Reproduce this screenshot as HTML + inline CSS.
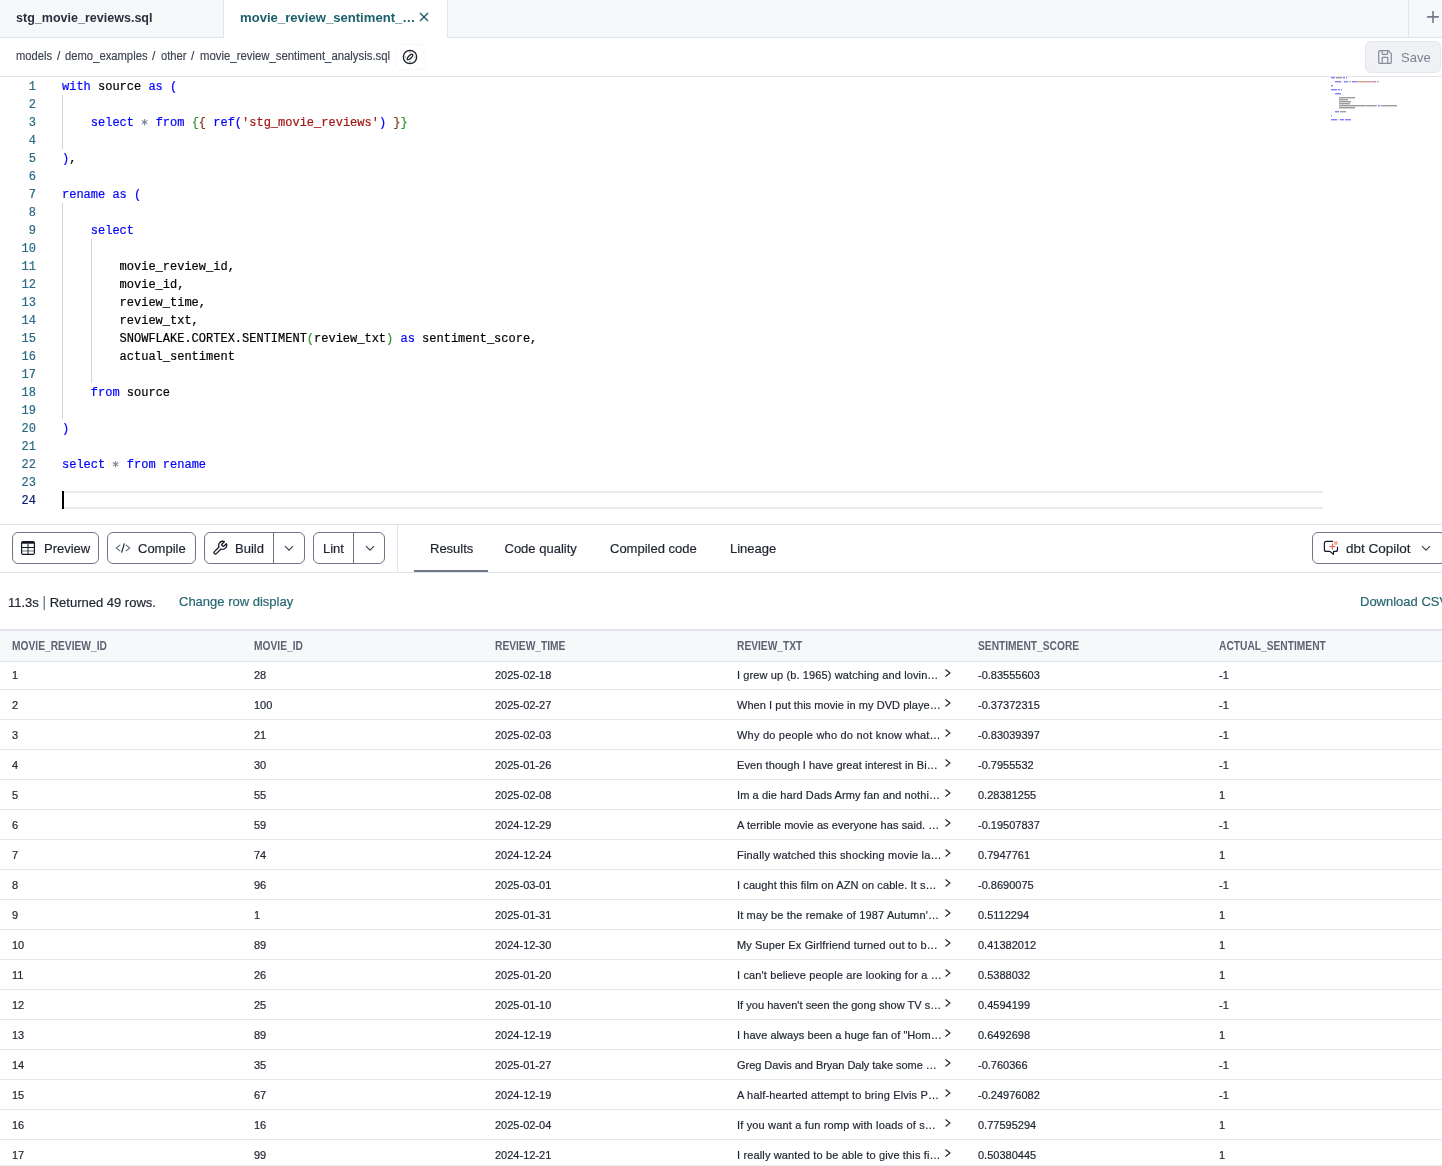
<!DOCTYPE html>
<html><head><meta charset="utf-8">
<style>
*{box-sizing:border-box;margin:0;padding:0}
html,body{width:1442px;height:1166px;overflow:hidden;background:#fff;}
#wrap{position:absolute;left:0;top:0;width:1442px;height:1166px;will-change:transform;font-family:"Liberation Sans",sans-serif;color:#1f2430}
.abs{position:absolute}
#tabbar{position:absolute;left:0;top:0;width:1442px;height:38px;background:#f7f8fa;border-bottom:1px solid #e1e4ea}
.tab1{position:absolute;left:0;top:0;width:224px;height:37px;border-right:1px solid #e1e4ea}
.tab2{position:absolute;left:224px;top:0;width:224px;height:38px;background:#fff;border-right:1px solid #e1e4ea}
.tabtxt{position:absolute;top:10px;font-size:13px;font-weight:700;white-space:nowrap;line-height:16px}
#crumb{position:absolute;left:0;top:38px;width:1442px;height:39px;border-bottom:1px solid #e1e4ea;background:#fff}
#code{position:absolute;left:0;top:78px;width:1442px;height:447px;font-family:"Liberation Mono",monospace;font-size:12px;-webkit-text-stroke:0.2px currentColor}
.ln{position:absolute;left:0;width:36px;text-align:right;color:#2b6a85;height:18px;line-height:18px}
.cl{position:absolute;left:62px;height:18px;line-height:18px;white-space:pre;color:#000}
.k{color:#0000ff}.b1{color:#0000ff}.b2{color:#319331}.b3{color:#7b3814}.s{color:#a31515}.op{color:#778899}
.guide{position:absolute;width:1px;background:#d3d3d3}
#toolbar{position:absolute;left:0;top:524px;width:1442px;height:49px;border-top:1px solid #e1e4ea;border-bottom:1px solid #e1e4ea}
.btn{position:absolute;top:7px;height:32px;border:1px solid #6e7687;border-radius:6px;background:#fff}
.btxt{position:absolute;top:8px;font-size:13px;line-height:16px;white-space:nowrap;color:#1f2430;-webkit-text-stroke:0.2px currentColor}
.rtab{position:absolute;top:16px;font-size:13px;line-height:16px;color:#1f2430;white-space:nowrap;-webkit-text-stroke:0.2px currentColor}
#status{position:absolute;left:0;top:573px;width:1442px;height:56px;-webkit-text-stroke:0.2px currentColor}
#tbl{position:absolute;left:0;top:629px;width:1442px}
.hdr{position:absolute;left:0;top:0;width:1442px;height:33px;background:#f7f8fa;border-top:2px solid #e1e4ea;border-bottom:1px solid #e1e4ea}
.hc{position:absolute;top:8px;font-size:12px;font-weight:700;color:#5c6474;line-height:14px;white-space:nowrap;transform:scaleX(0.852);transform-origin:0 0}
.row{position:absolute;left:0;width:1442px;border-bottom:1px solid #e4e6eb}
.c{position:absolute;font-size:11px;line-height:14px;color:#1f2430;white-space:nowrap;-webkit-text-stroke:0.2px #1f2430}
</style></head><body><div id="wrap">

<div id="tabbar">
  <div class="tab1"><div class="tabtxt" style="left:16px;color:#2a303b;font-size:13.5px;top:10px;transform:scaleX(0.928);transform-origin:0 0">stg_movie_reviews.sql</div></div>
  <div class="tab2"><div class="tabtxt" style="left:16px;color:#1a5f69;font-size:13.5px;top:10px;transform:scaleX(0.97);transform-origin:0 0">movie_review_sentiment_…</div>
    <svg class="abs" style="left:194.5px;top:11.5px" width="10" height="10" viewBox="0 0 10 10"><path d="M1 1L9 9M9 1L1 9" stroke="#15555e" stroke-width="1.3" fill="none"/></svg>
  </div>
  <div class="abs" style="left:1408px;top:0;width:1px;height:37px;background:#e1e4ea"></div>
  <svg class="abs" style="left:1426px;top:10px" width="14" height="14" viewBox="0 0 14 14"><path d="M7 1.1V12.9M1.1 6.9H12.9" stroke="#737988" stroke-width="1.6" fill="none"/></svg>
</div>

<div id="crumb">
  <div class="abs" style="left:16px;top:10.5px;font-size:12px;line-height:14px;color:#3c4350;white-space:nowrap;-webkit-text-stroke:0.15px currentColor;transform:scaleX(0.93);transform-origin:0 0">models</div><div class="abs" style="left:57px;top:10.5px;font-size:12px;line-height:14px;color:#3c4350;white-space:nowrap;-webkit-text-stroke:0.15px currentColor;transform:scaleX(1);transform-origin:0 0">/</div><div class="abs" style="left:65px;top:10.5px;font-size:12px;line-height:14px;color:#3c4350;white-space:nowrap;-webkit-text-stroke:0.15px currentColor;transform:scaleX(0.937);transform-origin:0 0">demo_examples</div><div class="abs" style="left:152px;top:10.5px;font-size:12px;line-height:14px;color:#3c4350;white-space:nowrap;-webkit-text-stroke:0.15px currentColor;transform:scaleX(1);transform-origin:0 0">/</div><div class="abs" style="left:160.5px;top:10.5px;font-size:12px;line-height:14px;color:#3c4350;white-space:nowrap;-webkit-text-stroke:0.15px currentColor;transform:scaleX(0.935);transform-origin:0 0">other</div><div class="abs" style="left:191px;top:10.5px;font-size:12px;line-height:14px;color:#3c4350;white-space:nowrap;-webkit-text-stroke:0.15px currentColor;transform:scaleX(1);transform-origin:0 0">/</div><div class="abs" style="left:199.5px;top:10.5px;font-size:12px;line-height:14px;color:#3c4350;white-space:nowrap;-webkit-text-stroke:0.15px currentColor;transform:scaleX(0.947);transform-origin:0 0">movie_review_sentiment_analysis.sql</div>
  <div class="abs" style="left:395px;top:6px;width:31px;height:26px;border:1px solid #f6f7f9;border-radius:6px"></div>
  <svg class="abs" style="left:402px;top:11px" width="16" height="16" viewBox="0 0 16 16"><circle cx="8" cy="8" r="6.7" stroke="#1a1f2b" stroke-width="1.25" fill="none"/><path d="M8 2.3V3.9M8 12.1V13.7M2.3 8H3.9M12.1 8H13.7" stroke="#7d838f" stroke-width="1.2"/><ellipse cx="8" cy="8" rx="3.6" ry="1.45" transform="rotate(-45 8 8)" stroke="#1a1f2b" stroke-width="1.25" fill="none"/></svg>
  <div class="abs" style="left:1365px;top:3px;width:76px;height:32px;background:#eff1f4;border:1px solid #e3e6ea;border-radius:6px"></div>
  <svg class="abs" style="left:1378px;top:12px" width="14" height="14" viewBox="0 0 14 14"><path d="M1.5 0.7H10.3L13.3 3.7V12.5Q13.3 13.3 12.5 13.3H1.5Q0.7 13.3 0.7 12.5V1.5Q0.7 0.7 1.5 0.7Z M3.6 0.7L4.6 4.3H9.2L10 1.2 M4.2 13.3V7.4H9.8V13.3" stroke="#858c9a" stroke-width="1.2" fill="none" stroke-linejoin="round"/></svg>
  <div class="abs" style="left:1401px;top:12px;font-size:13px;line-height:16px;color:#7b8291">Save</div>
</div>

<div id="code">
<div class="ln" style="top:0px">1</div>
<div class="cl" style="top:0px"><span class="k">with</span> source <span class="k">as</span> <span class="b1">(</span></div>
<div class="ln" style="top:18px">2</div>
<div class="ln" style="top:36px">3</div>
<div class="cl" style="top:36px">    <span class="k">select</span> <svg width="7.2" height="12" viewBox="0 0 7.2 12" style="vertical-align:-2px"><path d="M3.6 2.9V9.5M0.8 4.55L6.4 7.85M6.4 4.55L0.8 7.85" stroke="#7a8594" stroke-width="1.05" fill="none"/></svg> <span class="k">from</span> <span class="b2">{</span><span class="b3">{</span> <span class="k">ref</span><span class="b1">(</span><span class="s">&#x27;stg_movie_reviews&#x27;</span><span class="b1">)</span> <span class="b3">}</span><span class="b2">}</span></div>
<div class="ln" style="top:54px">4</div>
<div class="ln" style="top:72px">5</div>
<div class="cl" style="top:72px"><span class="b1">)</span>,</div>
<div class="ln" style="top:90px">6</div>
<div class="ln" style="top:108px">7</div>
<div class="cl" style="top:108px"><span class="k">rename</span> <span class="k">as</span> <span class="b1">(</span></div>
<div class="ln" style="top:126px">8</div>
<div class="ln" style="top:144px">9</div>
<div class="cl" style="top:144px">    <span class="k">select</span></div>
<div class="ln" style="top:162px">10</div>
<div class="ln" style="top:180px">11</div>
<div class="cl" style="top:180px">        movie_review_id,</div>
<div class="ln" style="top:198px">12</div>
<div class="cl" style="top:198px">        movie_id,</div>
<div class="ln" style="top:216px">13</div>
<div class="cl" style="top:216px">        review_time,</div>
<div class="ln" style="top:234px">14</div>
<div class="cl" style="top:234px">        review_txt,</div>
<div class="ln" style="top:252px">15</div>
<div class="cl" style="top:252px">        SNOWFLAKE.CORTEX.SENTIMENT<span class="b2">(</span>review_txt<span class="b2">)</span> <span class="k">as</span> sentiment_score,</div>
<div class="ln" style="top:270px">16</div>
<div class="cl" style="top:270px">        actual_sentiment</div>
<div class="ln" style="top:288px">17</div>
<div class="ln" style="top:306px">18</div>
<div class="cl" style="top:306px">    <span class="k">from</span> source</div>
<div class="ln" style="top:324px">19</div>
<div class="ln" style="top:342px">20</div>
<div class="cl" style="top:342px"><span class="b1">)</span></div>
<div class="ln" style="top:360px">21</div>
<div class="ln" style="top:378px">22</div>
<div class="cl" style="top:378px"><span class="k">select</span> <svg width="7.2" height="12" viewBox="0 0 7.2 12" style="vertical-align:-2px"><path d="M3.6 2.9V9.5M0.8 4.55L6.4 7.85M6.4 4.55L0.8 7.85" stroke="#7a8594" stroke-width="1.05" fill="none"/></svg> <span class="k">from</span> <span class="k">rename</span></div>
<div class="ln" style="top:396px">23</div>
<div class="ln" style="top:414px;color:#0b216f">24</div>
<div class="guide" style="left:62px;top:17px;height:54px"></div>
<div class="guide" style="left:62px;top:125px;height:216px"></div>
<div class="guide" style="left:91px;top:161px;height:144px"></div>
<div class="abs" style="left:62px;top:413px;width:1261px;height:18px;border-top:2px solid #ececec;border-bottom:2px solid #ececec"></div>
<div class="abs" style="left:62px;top:413px;width:2px;height:18px;background:#000"></div>
<svg class="abs" style="left:1331px;top:-1px" width="100" height="60"><rect x="0" y="0" width="4" height="1.4" opacity="0.75" fill="#5555ff"/><rect x="5" y="0" width="6" height="1.4" opacity="0.75" fill="#7a7a7a"/><rect x="12" y="0" width="2" height="1.4" opacity="0.75" fill="#5555ff"/><rect x="15" y="0" width="1" height="1.4" opacity="0.75" fill="#5560ff"/><rect x="4" y="4" width="6" height="1.4" opacity="0.75" fill="#5555ff"/><rect x="11" y="4" width="1" height="1.4" opacity="0.75" fill="#b0b8c0"/><rect x="13" y="4" width="4" height="1.4" opacity="0.75" fill="#5555ff"/><rect x="18" y="4" width="1" height="1.4" opacity="0.75" fill="#8abf9a"/><rect x="19" y="4" width="1" height="1.4" opacity="0.75" fill="#a08070"/><rect x="21" y="4" width="3" height="1.4" opacity="0.75" fill="#5555ff"/><rect x="24" y="4" width="1" height="1.4" opacity="0.75" fill="#5560ff"/><rect x="25" y="4" width="19" height="1.4" opacity="0.75" fill="#c87a7a"/><rect x="44" y="4" width="1" height="1.4" opacity="0.75" fill="#5560ff"/><rect x="46" y="4" width="1" height="1.4" opacity="0.75" fill="#a08070"/><rect x="47" y="4" width="1" height="1.4" opacity="0.75" fill="#8abf9a"/><rect x="0" y="8" width="1" height="1.4" opacity="0.75" fill="#5560ff"/><rect x="1" y="8" width="1" height="1.4" opacity="0.75" fill="#7a7a7a"/><rect x="0" y="12" width="6" height="1.4" opacity="0.75" fill="#5555ff"/><rect x="7" y="12" width="2" height="1.4" opacity="0.75" fill="#5555ff"/><rect x="10" y="12" width="1" height="1.4" opacity="0.75" fill="#5560ff"/><rect x="4" y="16" width="6" height="1.4" opacity="0.75" fill="#5555ff"/><rect x="8" y="20" width="16" height="1.4" opacity="0.75" fill="#7a7a7a"/><rect x="8" y="22" width="9" height="1.4" opacity="0.75" fill="#7a7a7a"/><rect x="8" y="24" width="12" height="1.4" opacity="0.75" fill="#7a7a7a"/><rect x="8" y="26" width="11" height="1.4" opacity="0.75" fill="#7a7a7a"/><rect x="8" y="28" width="26" height="1.4" opacity="0.75" fill="#7a7a7a"/><rect x="34" y="28" width="1" height="1.4" opacity="0.75" fill="#8abf9a"/><rect x="35" y="28" width="10" height="1.4" opacity="0.75" fill="#7a7a7a"/><rect x="45" y="28" width="1" height="1.4" opacity="0.75" fill="#8abf9a"/><rect x="47" y="28" width="2" height="1.4" opacity="0.75" fill="#5555ff"/><rect x="50" y="28" width="16" height="1.4" opacity="0.75" fill="#7a7a7a"/><rect x="8" y="30" width="16" height="1.4" opacity="0.75" fill="#7a7a7a"/><rect x="4" y="34" width="4" height="1.4" opacity="0.75" fill="#5555ff"/><rect x="9" y="34" width="6" height="1.4" opacity="0.75" fill="#7a7a7a"/><rect x="0" y="38" width="1" height="1.4" opacity="0.75" fill="#5560ff"/><rect x="0" y="42" width="6" height="1.4" opacity="0.75" fill="#5555ff"/><rect x="7" y="42" width="1" height="1.4" opacity="0.75" fill="#b0b8c0"/><rect x="9" y="42" width="4" height="1.4" opacity="0.75" fill="#5555ff"/><rect x="14" y="42" width="6" height="1.4" opacity="0.75" fill="#5555ff"/></svg>
</div>

<div id="toolbar">
<div class="btn" style="left:12px;width:87px"><svg class="abs" style="left:8px;top:8px" width="14" height="14" viewBox="0 0 14 14"><rect x="0.6" y="0.6" width="12.8" height="12.8" rx="1.6" fill="none" stroke="#141926" stroke-width="1.2"/><rect x="0.6" y="0.6" width="12.8" height="2.2" rx="1" fill="#141926"/><path d="M0.6 6.5H13.4M7 2.6V13.4" stroke="#141926" stroke-width="1"/><path d="M0.6 10H13.4" stroke="#141926" stroke-width="1" opacity="0.6"/></svg><div class="btxt" style="left:31px">Preview</div></div>
<div class="btn" style="left:107px;width:89px"><svg class="abs" style="left:7px;top:10px" width="16" height="11" viewBox="0 0 16 11"><path d="M4.8 2.2L1.2 5L4.8 7.8M11.2 2.2L14.8 5L11.2 7.8" stroke="#6b7280" stroke-width="1.1" fill="none" stroke-linecap="round"/><path d="M9.2 0.8L6.8 9.2" stroke="#141926" stroke-width="1.1" stroke-linecap="round"/></svg><div class="btxt" style="left:30px">Compile</div></div>
<div class="btn" style="left:204px;width:101px"><svg class="abs" style="left:6.5px;top:6.5px" width="16" height="16" viewBox="0 0 24 24"><path d="M14.7 6.3a1 1 0 0 0 0 1.4l1.6 1.6a1 1 0 0 0 1.4 0l3.77-3.77a6 6 0 0 1-7.94 7.94l-6.91 6.91a2.12 2.12 0 0 1-3-3l6.91-6.91a6 6 0 0 1 7.94-7.94l-3.76 3.76z" stroke="#141926" stroke-width="1.9" fill="none" stroke-linejoin="round"/></svg><div class="btxt" style="left:30px">Build</div><div class="abs" style="left:68px;top:0;width:1px;height:30px;background:#6e7687"></div><svg class="abs" style="left:79px;top:12px" width="10" height="7" viewBox="0 0 10 7"><path d="M1 1.2L5 5.2L9 1.2" stroke="#3a4150" stroke-width="1.2" fill="none"/></svg></div>
<div class="btn" style="left:313px;width:72px"><div class="btxt" style="left:9px">Lint</div><div class="abs" style="left:39px;top:0;width:1px;height:30px;background:#6e7687"></div><svg class="abs" style="left:51px;top:12px" width="10" height="7" viewBox="0 0 10 7"><path d="M1 1.2L5 5.2L9 1.2" stroke="#3a4150" stroke-width="1.2" fill="none"/></svg></div>
<div class="abs" style="left:397px;top:0;width:1px;height:47px;background:#e1e4ea"></div>
<div class="rtab" style="left:430px">Results</div>
<div class="rtab" style="left:504.5px">Code quality</div>
<div class="rtab" style="left:610px">Compiled code</div>
<div class="rtab" style="left:730px">Lineage</div>
<div class="abs" style="left:414px;top:44.5px;width:74px;height:2.5px;background:#6f7789"></div>
<div class="btn" style="left:1312px;width:134px;top:7px"><svg class="abs" style="left:7px;top:3px" width="22" height="22" viewBox="0 0 22 22"><path d="M12.6 5.45H6.4Q4.4 5.45 4.4 7.45V13.4Q4.4 15.4 6.4 15.4H9.9L13.4 18.3L13.6 15.4H15.5Q17.5 15.4 17.5 13.4V11.2" stroke="#151a26" stroke-width="1.2" fill="none" stroke-linecap="round" stroke-linejoin="round"/><path d="M12.45 8V9.8M12.45 11.2V13M9.95 10.5H11.75M13.15 10.5H14.95" stroke="#e8553e" stroke-width="1.1" stroke-linecap="round"/><circle cx="15.9" cy="7" r="1.9" fill="#f4a898"/></svg><div class="btxt" style="left:33px;top:8px;font-size:13.5px">dbt Copilot</div><svg class="abs" style="left:108px;top:12px" width="10" height="7" viewBox="0 0 10 7"><path d="M1 1.2L5 5.2L9 1.2" stroke="#3a4150" stroke-width="1.2" fill="none"/></svg></div>
</div>

<div id="status">
  <div class="abs" style="left:8px;top:21px;font-size:13px;line-height:16px;color:#1f2430;white-space:nowrap">11.3s <span style="color:#737985;font-size:14px">|</span> Returned 49 rows.</div>
  <div class="abs" style="left:179px;top:21px;font-size:13px;line-height:16px;color:#286770;white-space:nowrap">Change row display</div>
  <div class="abs" style="left:1360px;top:21px;font-size:13px;line-height:16px;color:#286770;white-space:nowrap">Download CSV</div>
</div>

<div id="tbl">
<div class="hdr"><div class="hc" style="left:12px">MOVIE_REVIEW_ID</div><div class="hc" style="left:254px">MOVIE_ID</div><div class="hc" style="left:495px">REVIEW_TIME</div><div class="hc" style="left:737px">REVIEW_TXT</div><div class="hc" style="left:978px">SENTIMENT_SCORE</div><div class="hc" style="left:1219px">ACTUAL_SENTIMENT</div></div>
<div class="row" style="top:33px;height:28px"></div>
<div class="c" style="left:12px;top:39px">1</div>
<div class="c" style="left:254px;top:39px">28</div>
<div class="c" style="left:495px;top:39px">2025-02-18</div>
<div class="c" style="left:737px;top:39px;letter-spacing:0.118px">I grew up (b. 1965) watching and lovin…</div>
<div class="c" style="left:978px;top:39px">-0.83555603</div>
<div class="c" style="left:1219px;top:39px">-1</div>
<svg class="abs" style="left:944px;top:39px" width="8" height="10" viewBox="0 0 8 10"><path d="M1.5 1.5L6 5L1.5 8.5" stroke="#1f2430" stroke-width="1.1" fill="none"/></svg>
<div class="row" style="top:61px;height:30px"></div>
<div class="c" style="left:12px;top:69px">2</div>
<div class="c" style="left:254px;top:69px">100</div>
<div class="c" style="left:495px;top:69px">2025-02-27</div>
<div class="c" style="left:737px;top:69px;letter-spacing:0.054px">When I put this movie in my DVD playe…</div>
<div class="c" style="left:978px;top:69px">-0.37372315</div>
<div class="c" style="left:1219px;top:69px">-1</div>
<svg class="abs" style="left:944px;top:69px" width="8" height="10" viewBox="0 0 8 10"><path d="M1.5 1.5L6 5L1.5 8.5" stroke="#1f2430" stroke-width="1.1" fill="none"/></svg>
<div class="row" style="top:91px;height:30px"></div>
<div class="c" style="left:12px;top:99px">3</div>
<div class="c" style="left:254px;top:99px">21</div>
<div class="c" style="left:495px;top:99px">2025-02-03</div>
<div class="c" style="left:737px;top:99px;letter-spacing:0.215px">Why do people who do not know what…</div>
<div class="c" style="left:978px;top:99px">-0.83039397</div>
<div class="c" style="left:1219px;top:99px">-1</div>
<svg class="abs" style="left:944px;top:99px" width="8" height="10" viewBox="0 0 8 10"><path d="M1.5 1.5L6 5L1.5 8.5" stroke="#1f2430" stroke-width="1.1" fill="none"/></svg>
<div class="row" style="top:121px;height:30px"></div>
<div class="c" style="left:12px;top:129px">4</div>
<div class="c" style="left:254px;top:129px">30</div>
<div class="c" style="left:495px;top:129px">2025-01-26</div>
<div class="c" style="left:737px;top:129px;letter-spacing:0.082px">Even though I have great interest in Bi…</div>
<div class="c" style="left:978px;top:129px">-0.7955532</div>
<div class="c" style="left:1219px;top:129px">-1</div>
<svg class="abs" style="left:944px;top:129px" width="8" height="10" viewBox="0 0 8 10"><path d="M1.5 1.5L6 5L1.5 8.5" stroke="#1f2430" stroke-width="1.1" fill="none"/></svg>
<div class="row" style="top:151px;height:30px"></div>
<div class="c" style="left:12px;top:159px">5</div>
<div class="c" style="left:254px;top:159px">55</div>
<div class="c" style="left:495px;top:159px">2025-02-08</div>
<div class="c" style="left:737px;top:159px;letter-spacing:0.115px">Im a die hard Dads Army fan and nothi…</div>
<div class="c" style="left:978px;top:159px">0.28381255</div>
<div class="c" style="left:1219px;top:159px">1</div>
<svg class="abs" style="left:944px;top:159px" width="8" height="10" viewBox="0 0 8 10"><path d="M1.5 1.5L6 5L1.5 8.5" stroke="#1f2430" stroke-width="1.1" fill="none"/></svg>
<div class="row" style="top:181px;height:30px"></div>
<div class="c" style="left:12px;top:189px">6</div>
<div class="c" style="left:254px;top:189px">59</div>
<div class="c" style="left:495px;top:189px">2024-12-29</div>
<div class="c" style="left:737px;top:189px;letter-spacing:0.061px">A terrible movie as everyone has said. …</div>
<div class="c" style="left:978px;top:189px">-0.19507837</div>
<div class="c" style="left:1219px;top:189px">-1</div>
<svg class="abs" style="left:944px;top:189px" width="8" height="10" viewBox="0 0 8 10"><path d="M1.5 1.5L6 5L1.5 8.5" stroke="#1f2430" stroke-width="1.1" fill="none"/></svg>
<div class="row" style="top:211px;height:30px"></div>
<div class="c" style="left:12px;top:219px">7</div>
<div class="c" style="left:254px;top:219px">74</div>
<div class="c" style="left:495px;top:219px">2024-12-24</div>
<div class="c" style="left:737px;top:219px;letter-spacing:0.185px">Finally watched this shocking movie la…</div>
<div class="c" style="left:978px;top:219px">0.7947761</div>
<div class="c" style="left:1219px;top:219px">1</div>
<svg class="abs" style="left:944px;top:219px" width="8" height="10" viewBox="0 0 8 10"><path d="M1.5 1.5L6 5L1.5 8.5" stroke="#1f2430" stroke-width="1.1" fill="none"/></svg>
<div class="row" style="top:241px;height:30px"></div>
<div class="c" style="left:12px;top:249px">8</div>
<div class="c" style="left:254px;top:249px">96</div>
<div class="c" style="left:495px;top:249px">2025-03-01</div>
<div class="c" style="left:737px;top:249px;letter-spacing:0.096px">I caught this film on AZN on cable. It s…</div>
<div class="c" style="left:978px;top:249px">-0.8690075</div>
<div class="c" style="left:1219px;top:249px">-1</div>
<svg class="abs" style="left:944px;top:249px" width="8" height="10" viewBox="0 0 8 10"><path d="M1.5 1.5L6 5L1.5 8.5" stroke="#1f2430" stroke-width="1.1" fill="none"/></svg>
<div class="row" style="top:271px;height:30px"></div>
<div class="c" style="left:12px;top:279px">9</div>
<div class="c" style="left:254px;top:279px">1</div>
<div class="c" style="left:495px;top:279px">2025-01-31</div>
<div class="c" style="left:737px;top:279px;letter-spacing:0.15px">It may be the remake of 1987 Autumn&#x27;…</div>
<div class="c" style="left:978px;top:279px">0.5112294</div>
<div class="c" style="left:1219px;top:279px">1</div>
<svg class="abs" style="left:944px;top:279px" width="8" height="10" viewBox="0 0 8 10"><path d="M1.5 1.5L6 5L1.5 8.5" stroke="#1f2430" stroke-width="1.1" fill="none"/></svg>
<div class="row" style="top:301px;height:30px"></div>
<div class="c" style="left:12px;top:309px">10</div>
<div class="c" style="left:254px;top:309px">89</div>
<div class="c" style="left:495px;top:309px">2024-12-30</div>
<div class="c" style="left:737px;top:309px;letter-spacing:0.134px">My Super Ex Girlfriend turned out to b…</div>
<div class="c" style="left:978px;top:309px">0.41382012</div>
<div class="c" style="left:1219px;top:309px">1</div>
<svg class="abs" style="left:944px;top:309px" width="8" height="10" viewBox="0 0 8 10"><path d="M1.5 1.5L6 5L1.5 8.5" stroke="#1f2430" stroke-width="1.1" fill="none"/></svg>
<div class="row" style="top:331px;height:30px"></div>
<div class="c" style="left:12px;top:339px">11</div>
<div class="c" style="left:254px;top:339px">26</div>
<div class="c" style="left:495px;top:339px">2025-01-20</div>
<div class="c" style="left:737px;top:339px;letter-spacing:0.138px">I can&#x27;t believe people are looking for a …</div>
<div class="c" style="left:978px;top:339px">0.5388032</div>
<div class="c" style="left:1219px;top:339px">1</div>
<svg class="abs" style="left:944px;top:339px" width="8" height="10" viewBox="0 0 8 10"><path d="M1.5 1.5L6 5L1.5 8.5" stroke="#1f2430" stroke-width="1.1" fill="none"/></svg>
<div class="row" style="top:361px;height:30px"></div>
<div class="c" style="left:12px;top:369px">12</div>
<div class="c" style="left:254px;top:369px">25</div>
<div class="c" style="left:495px;top:369px">2025-01-10</div>
<div class="c" style="left:737px;top:369px;letter-spacing:0.034px">If you haven&#x27;t seen the gong show TV s…</div>
<div class="c" style="left:978px;top:369px">0.4594199</div>
<div class="c" style="left:1219px;top:369px">-1</div>
<svg class="abs" style="left:944px;top:369px" width="8" height="10" viewBox="0 0 8 10"><path d="M1.5 1.5L6 5L1.5 8.5" stroke="#1f2430" stroke-width="1.1" fill="none"/></svg>
<div class="row" style="top:391px;height:30px"></div>
<div class="c" style="left:12px;top:399px">13</div>
<div class="c" style="left:254px;top:399px">89</div>
<div class="c" style="left:495px;top:399px">2024-12-19</div>
<div class="c" style="left:737px;top:399px;letter-spacing:0.057px">I have always been a huge fan of &quot;Hom…</div>
<div class="c" style="left:978px;top:399px">0.6492698</div>
<div class="c" style="left:1219px;top:399px">1</div>
<svg class="abs" style="left:944px;top:399px" width="8" height="10" viewBox="0 0 8 10"><path d="M1.5 1.5L6 5L1.5 8.5" stroke="#1f2430" stroke-width="1.1" fill="none"/></svg>
<div class="row" style="top:421px;height:30px"></div>
<div class="c" style="left:12px;top:429px">14</div>
<div class="c" style="left:254px;top:429px">35</div>
<div class="c" style="left:495px;top:429px">2025-01-27</div>
<div class="c" style="left:737px;top:429px;letter-spacing:-0.039px">Greg Davis and Bryan Daly take some …</div>
<div class="c" style="left:978px;top:429px">-0.760366</div>
<div class="c" style="left:1219px;top:429px">-1</div>
<svg class="abs" style="left:944px;top:429px" width="8" height="10" viewBox="0 0 8 10"><path d="M1.5 1.5L6 5L1.5 8.5" stroke="#1f2430" stroke-width="1.1" fill="none"/></svg>
<div class="row" style="top:451px;height:30px"></div>
<div class="c" style="left:12px;top:459px">15</div>
<div class="c" style="left:254px;top:459px">67</div>
<div class="c" style="left:495px;top:459px">2024-12-19</div>
<div class="c" style="left:737px;top:459px;letter-spacing:0.161px">A half-hearted attempt to bring Elvis P…</div>
<div class="c" style="left:978px;top:459px">-0.24976082</div>
<div class="c" style="left:1219px;top:459px">-1</div>
<svg class="abs" style="left:944px;top:459px" width="8" height="10" viewBox="0 0 8 10"><path d="M1.5 1.5L6 5L1.5 8.5" stroke="#1f2430" stroke-width="1.1" fill="none"/></svg>
<div class="row" style="top:481px;height:30px"></div>
<div class="c" style="left:12px;top:489px">16</div>
<div class="c" style="left:254px;top:489px">16</div>
<div class="c" style="left:495px;top:489px">2025-02-04</div>
<div class="c" style="left:737px;top:489px;letter-spacing:0.164px">If you want a fun romp with loads of s…</div>
<div class="c" style="left:978px;top:489px">0.77595294</div>
<div class="c" style="left:1219px;top:489px">1</div>
<svg class="abs" style="left:944px;top:489px" width="8" height="10" viewBox="0 0 8 10"><path d="M1.5 1.5L6 5L1.5 8.5" stroke="#1f2430" stroke-width="1.1" fill="none"/></svg>
<div class="row" style="top:511px;height:30px"></div>
<div class="c" style="left:12px;top:519px">17</div>
<div class="c" style="left:254px;top:519px">99</div>
<div class="c" style="left:495px;top:519px">2024-12-21</div>
<div class="c" style="left:737px;top:519px;letter-spacing:0.144px">I really wanted to be able to give this fi…</div>
<div class="c" style="left:978px;top:519px">0.50380445</div>
<div class="c" style="left:1219px;top:519px">1</div>
<svg class="abs" style="left:944px;top:519px" width="8" height="10" viewBox="0 0 8 10"><path d="M1.5 1.5L6 5L1.5 8.5" stroke="#1f2430" stroke-width="1.1" fill="none"/></svg>
<div class="abs" style="left:0;top:536px;width:1442px;height:1px;background:#eceef2"></div>
</div>
</div></body></html>
